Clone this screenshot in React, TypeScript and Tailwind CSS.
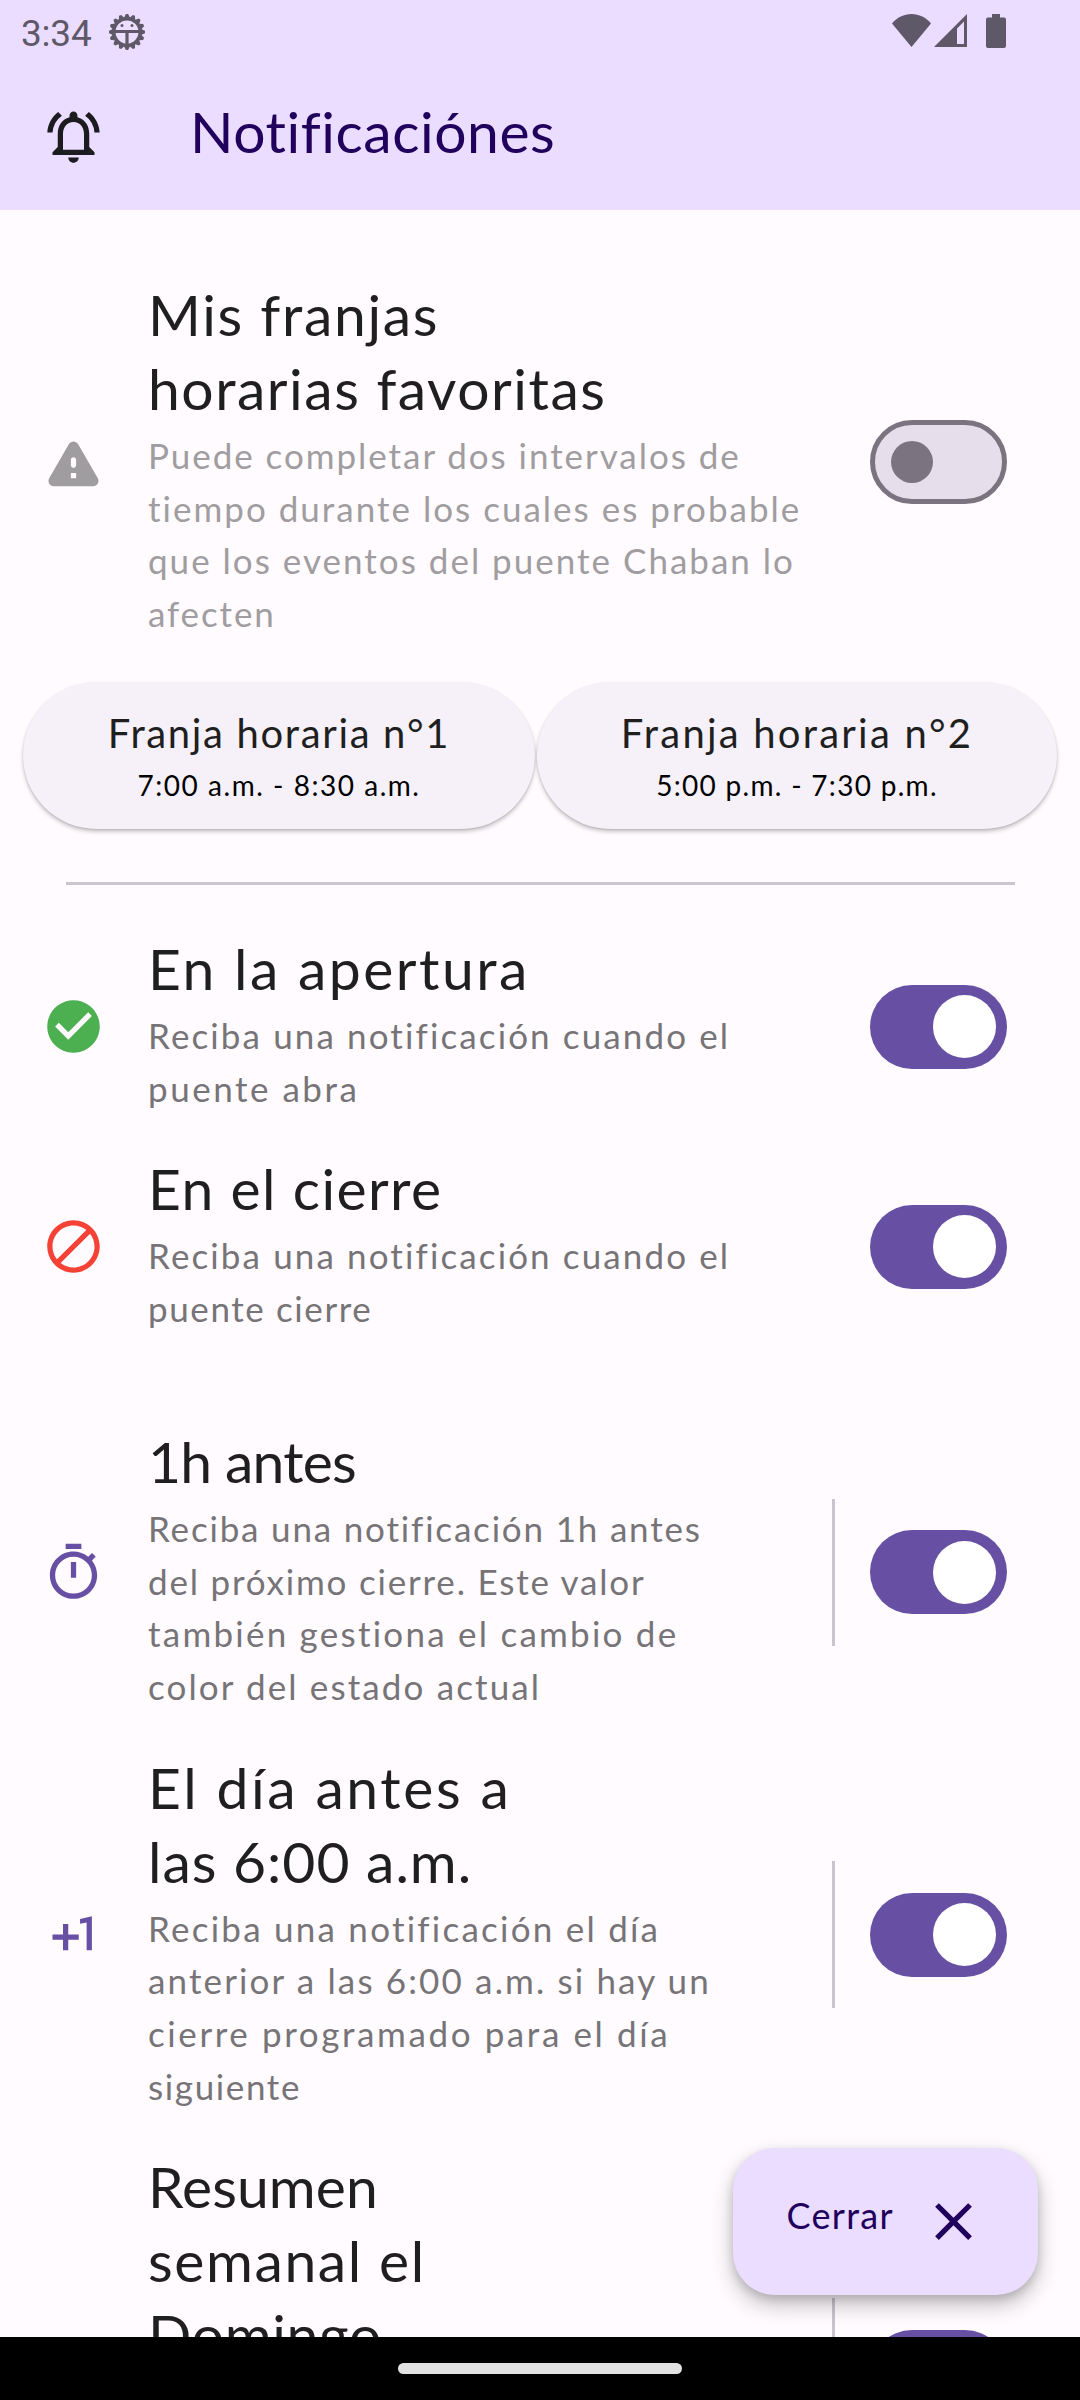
import React from 'react'

type Line = [text: string, tracking: string]

function Icon({ d, className }: { d: string; className: string }) {
  return (
    <svg viewBox="0 0 24 24" fill="currentColor" className={`size-[63px] shrink-0 ${className}`}>
      <path d={d} />
    </svg>
  )
}

const PATHS = {
  bell: 'M12 22c1.1 0 2-.9 2-2h-4c0 1.1.9 2 2 2zm6-6v-5c0-3.07-1.63-5.64-4.5-6.32V4c0-.83-.67-1.5-1.5-1.5s-1.5.67-1.5 1.5v.68C7.64 5.36 6 7.92 6 11v5l-2 2v1h16v-1l-2-2zm-2 1H8v-6c0-2.48 1.51-4.5 4-4.5s4 2.02 4 4.5v6zM7.58 4.08 6.15 2.65C3.75 4.48 2.17 7.3 2.03 10.5h2a8.445 8.445 0 0 1 3.55-6.42zm12.39 6.42h2c-.15-3.2-1.73-6.02-4.12-7.85l-1.42 1.43a8.495 8.495 0 0 1 3.54 6.42z',
  warning:
    'M4.47 21h15.06c1.54 0 2.5-1.67 1.73-3L13.73 4.99c-.77-1.33-2.69-1.33-3.46 0L2.74 18c-.77 1.33.19 3 1.73 3zM12 14c-.55 0-1-.45-1-1v-2c0-.55.45-1 1-1s1 .45 1 1v2c0 .55-.45 1-1 1zm1 4h-2v-2h2v2z',
  check:
    'M12 2C6.48 2 2 6.48 2 12s4.48 10 10 10 10-4.48 10-10S17.52 2 12 2zm-2 15l-5-5 1.41-1.41L10 14.17l7.59-7.59L19 8l-9 9z',
  block:
    'M12 2C6.5 2 2 6.5 2 12s4.5 10 10 10 10-4.5 10-10S17.5 2 12 2zM4 12c0-4.4 3.6-8 8-8 1.8 0 3.5.6 4.9 1.7L5.7 16.9C4.6 15.5 4 13.8 4 12zm8 8c-1.8 0-3.5-.6-4.9-1.7L18.3 7.1C19.4 8.5 20 10.2 20 12c0 4.4-3.6 8-8 8z',
  timer:
    'M15 1H9v2h6V1zm-4 13h2V8h-2v6zm8.03-6.61l1.42-1.42c-.43-.51-.9-.99-1.41-1.41l-1.42 1.42C16.07 4.74 14.12 4 12 4c-4.97 0-9 4.03-9 9s4.02 9 9 9 9-4.03 9-9c0-2.12-.74-4.07-1.97-5.61zM12 20c-3.87 0-7-3.13-7-7s3.13-7 7-7 7 3.13 7 7-3.13 7-7 7z',
  plusOne: 'M10 8H8v4H4v2h4v4h2v-4h4v-2h-4V8zm4.5-1.92V7.9l2.5-.5V18h2V5l-4.5 1.08z',
  close:
    'M19 6.41L17.59 5 12 10.59 6.41 5 5 6.41 10.59 12 5 17.59 6.41 19 12 13.41 17.59 19 19 17.59 13.41 12z',
}

function Toggle({ on }: { on: boolean }) {
  return on ? (
    <div className="flex h-[84px] w-[136.5px] shrink-0 items-center justify-end rounded-full bg-[#6750a4] pr-[10.5px]">
      <div className="size-[63px] rounded-full bg-white" />
    </div>
  ) : (
    <div className="flex h-[84px] w-[136.5px] shrink-0 items-center rounded-full border-[5.25px] border-[#7b7480] bg-[#e6dfeb] pl-[15.75px]">
      <div className="size-[42px] rounded-full bg-[#7b7480]" />
    </div>
  )
}

function Row({
  icon,
  iconClass,
  title,
  body,
  bodyClass = 'text-[#767477]',
  on = true,
  divided = false,
}: {
  icon?: string
  iconClass?: string
  title: Line[]
  body: Line[]
  bodyClass?: string
  on?: boolean
  divided?: boolean
}) {
  return (
    <section className="flex items-center py-[20.6px] pr-[73.5px] pl-[42px]">
      {icon ? <Icon d={icon} className={iconClass ?? ''} /> : <div className="size-[63px] shrink-0" />}
      <div className="ml-[43px] flex-1 whitespace-nowrap">
        <h2 className="-mt-[6px] mb-[6px] text-[57px] leading-[74px] text-[#1f1f1f]">
          {title.map(([t, tracking]) => (
            <span key={t} className={`block ${tracking}`}>{t}</span>
          ))}
        </h2>
        {body.length > 0 ? (
          <p className={`-mt-[2px] mb-[2px] text-[35px] leading-[52.6px] ${bodyClass}`}>
            {body.map(([t, tracking]) => (
              <span key={t} className={`block ${tracking}`}>{t}</span>
            ))}
          </p>
        ) : (
          <div className="h-[210.4px]" />
        )}
      </div>
      {divided && <div className="mr-[35px] h-[147px] w-[2.6px] shrink-0 bg-[#cac4d0]" />}
      <Toggle on={on} />
    </section>
  )
}

function Slot({ title, time, box }: { title: Line; time: Line; box: string }) {
  return (
    <button
      className={`flex h-[147px] flex-col items-center rounded-full bg-[#f6f1f9] pt-[25px] whitespace-nowrap shadow-[0_3px_4px_rgba(0,0,0,0.2),0_1px_2px_rgba(0,0,0,0.12)] ${box}`}
    >
      <span className={`text-[40px] leading-[52px] text-[#1f1f1f] ${title[1]}`}>{title[0]}</span>
      <span className={`mt-[6px] text-[28px] leading-[40px] text-black ${time[1]}`}>{time[0]}</span>
    </button>
  )
}

const TEETH = Array.from({ length: 16 }, (_, i) => i * 22.5)

function StatusBar() {
  return (
    <div className="flex h-[62px] items-start text-[#5f5868]">
      <span className="ml-[21px] w-[88px] pt-[11px] font-['Roboto'] text-[37px] leading-[45px] tracking-[-0.2px]">3:34</span>
      <svg viewBox="0 0 36 38" className="mt-[13px] h-[38px] w-[36px]">
        <g transform="translate(18 19)">
          {TEETH.map((a) => (
            <path key={a} d="M-3 -14 L-1.2 -18 H1.2 L3 -14Z" fill="currentColor" transform={`rotate(${a})`} />
          ))}
          <circle r="13.2" fill="none" stroke="currentColor" strokeWidth="3.4" />
          <path d="M-14 -0.5H14M0 -0.5V15" stroke="currentColor" strokeWidth="3.2" />
          <circle cx="-5" cy="-6.5" r="1.5" fill="currentColor" />
          <circle cx="5" cy="-6.5" r="1.5" fill="currentColor" />
        </g>
      </svg>
      <svg viewBox="0 0 39 33" className="mt-[14px] ml-[747px] h-[33px] w-[39px]" fill="currentColor">
        <path d="M0 9.500C5 3.500 12 0 19.500 0S34 3.500 39 9.500L19.500 33Z" />
      </svg>
      <svg viewBox="0 0 33 33" className="mt-[14px] ml-[3px] h-[33px] w-[33px]" fill="currentColor" fillRule="evenodd">
        <path d="M0 33L33 0V33ZM23 14.500V30H30V7.500Z" />
      </svg>
      <svg viewBox="0 0 20 34" className="mt-[14px] ml-[19px] h-[34px] w-[20px]" fill="currentColor">
        <path d="M6 0H14V3.500H18Q20 3.500 20 5.500V32Q20 34 18 34H2Q0 34 0 32V5.500Q0 3.500 2 3.500H6Z" />
      </svg>
    </div>
  )
}

export default function App() {
  return (
    <div className="relative flex h-[2400px] w-[1080px] flex-col overflow-hidden bg-[#fffbff] font-['Lato',sans-serif]">
      <header className="h-[210px] shrink-0 bg-[#eaddff]">
        <StatusBar />
        <div className="flex h-[148px] items-start pl-[42px]">
          <Icon d={PATHS.bell} className="mt-[43px] text-[#1c1b1f]" />
          <h1 className="mt-[32px] ml-[85px] text-[57px] leading-[74px] tracking-[0.55px] text-[#21005d]">Notificaciónes</h1>
        </div>
      </header>

      <main className="min-h-0 flex-1 overflow-hidden pt-[52.4px]">
        <Row
          icon={PATHS.warning}
          iconClass="text-[#9f9d9f]"
          title={[
            ['Mis franjas', 'tracking-[1.7px]'],
            ['horarias favoritas', 'tracking-[1.52px]'],
          ]}
          body={[
            ['Puede completar dos intervalos de', 'tracking-[1.95px]'],
            ['tiempo durante los cuales es probable', 'tracking-[2.01px]'],
            ['que los eventos del puente Chaban lo', 'tracking-[2.01px]'],
            ['afecten', 'tracking-[1.9px]'],
          ]}
          bodyClass="text-[#9f9d9f]"
          on={false}
        />
        <div className="mt-[20px] flex gap-[2px] pl-[23px]">
          <Slot
            box="w-[512px]"
            title={['Franja horaria n°1', 'tracking-[1.65px]']}
            time={['7:00 a.m. - 8:30 a.m.', 'tracking-[1.53px]']}
          />
          <Slot
            box="w-[520px]"
            title={['Franja horaria n°2', 'tracking-[2.22px]']}
            time={['5:00 p.m. - 7:30 p.m.', 'tracking-[1.3px]']}
          />
        </div>
        <div className="mt-[53px] mr-[65.5px] mb-[31.8px] ml-[65.5px] h-[2.6px] bg-[#cac4d0]" />
        <Row
          icon={PATHS.check}
          iconClass="text-[#4caf50]"
          title={[['En la apertura', 'tracking-[2.5px]']]}
          body={[
            ['Reciba una notificación cuando el', 'tracking-[2.12px]'],
            ['puente abra', 'tracking-[2.52px]'],
          ]}
        />
        <Row
          icon={PATHS.block}
          iconClass="text-[#f44336]"
          title={[['En el cierre', 'tracking-[1.36px]']]}
          body={[
            ['Reciba una notificación cuando el', 'tracking-[2.12px]'],
            ['puente cierre', 'tracking-[1.6px]'],
          ]}
        />
        <div className="h-[52.5px]" />
        <Row
          icon={PATHS.timer}
          iconClass="text-[#6750a4]"
          title={[['1h antes', 'tracking-[-0.8px]']]}
          body={[
            ['Reciba una notificación 1h antes', 'tracking-[1.82px]'],
            ['del próximo cierre. Este valor', 'tracking-[1.8px]'],
            ['también gestiona el cambio de', 'tracking-[2.24px]'],
            ['color del estado actual', 'tracking-[2.12px]'],
          ]}
          divided
        />
        <Row
          icon={PATHS.plusOne}
          iconClass="text-[#6750a4]"
          title={[
            ['El día antes a', 'tracking-[2.6px]'],
            ['las 6:00 a.m.', 'tracking-[1px]'],
          ]}
          body={[
            ['Reciba una notificación el día', 'tracking-[2.24px]'],
            ['anterior a las 6:00 a.m. si hay un', 'tracking-[2.14px]'],
            ['cierre programado para el día', 'tracking-[2.6px]'],
            ['siguiente', 'tracking-[1.63px]'],
          ]}
          divided
        />
        <Row
          title={[
            ['Resumen', 'tracking-[0.1px]'],
            ['semanal el', 'tracking-[1.6px]'],
            ['Domingo', 'tracking-[0.69px]'],
          ]}
          body={[]}
          divided
        />
      </main>

      <button className="absolute top-[2147.5px] left-[733px] flex h-[147px] w-[304.5px] items-center rounded-[42px] bg-[#eaddff] pl-[53.5px] text-[#21005d] shadow-[0_10px_22px_rgba(0,0,0,0.24),0_4px_10px_rgba(0,0,0,0.14)]">
        <span className="-mt-[13px] w-[135px] text-left text-[36px] leading-[44px] tracking-[1.29px]">Cerrar</span>
        <Icon d={PATHS.close} className="" />
      </button>

      <footer className="z-10 flex h-[63px] shrink-0 items-start justify-center bg-black pt-[26px]">
        <div className="h-[11px] w-[284px] rounded-full bg-[#e2e2e2]" />
      </footer>
    </div>
  )
}
